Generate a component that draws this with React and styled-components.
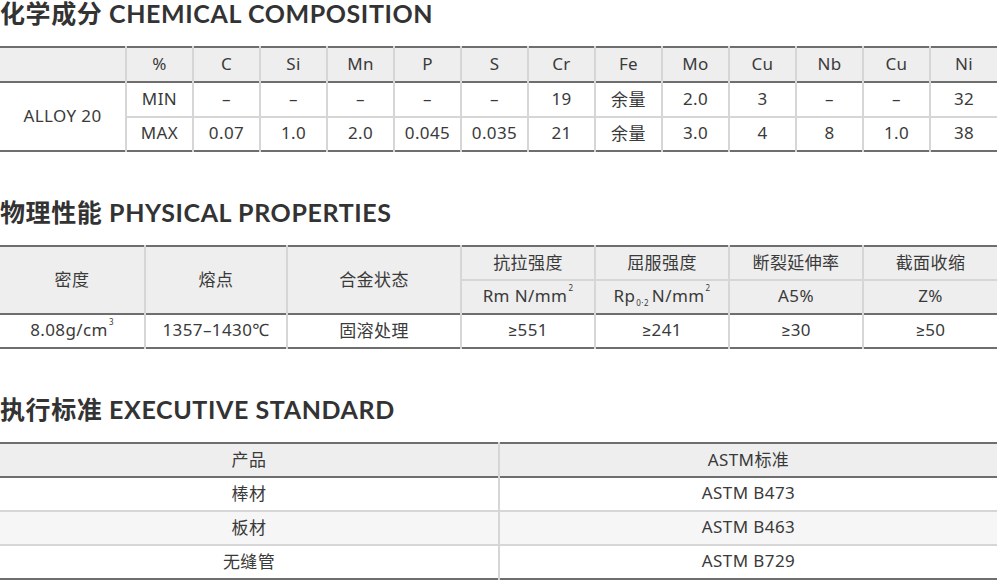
import React from 'react';
import styled, { createGlobalStyle } from 'styled-components';

const GlobalStyle = createGlobalStyle`
  html, body {
    margin: 0;
    padding: 0;
    background: #ffffff;
  }
  body {
    font-family: "Noto Sans", "Noto Sans CJK SC", sans-serif;
    color: #3a3a3a;
  }
`;

const Page = styled.div`
  width: 997px;
  display: flex;
  flex-direction: column;
  gap: 47px;
`;

const Section = styled.section`
  display: flex;
  flex-direction: column;
  gap: 16px;
`;

const Title = styled.h2`
  margin: 0;
  height: 30px;
  line-height: 26px;
  font-family: Lato, "Noto Sans CJK SC", sans-serif;
  font-size: 25px;
  font-weight: 700;
  letter-spacing: 0.6px;
  color: #333333;
  white-space: nowrap;
`;

const Table = styled.table`
  width: 997px;
  border-collapse: collapse;
  table-layout: fixed;
  border-top: 2px solid #6e6e6e;
  border-bottom: 2px solid #6e6e6e;
`;

const Head = styled.thead`
  background: #eeeeee;
  border-bottom: 2px solid #6e6e6e;
`;

const Row = styled.tr`
  background: ${({ $striped }) => ($striped ? '#f6f6f6' : '#ffffff')};
  & + & {
    border-top: 2px solid #d6d6d6;
  }
`;

const HeadRow = styled.tr`
  & + & {
    border-top: 2px solid #d6d6d6;
  }
`;

const Cell = styled.td`
  height: ${({ $h }) => ($h || 32) - 3}px;
  padding: 0 0 3px;
  text-align: center;
  vertical-align: middle;
  font-size: 17px;
  font-weight: 400;
  letter-spacing: 0.4px;
  color: #3a3a3a;
  white-space: nowrap;
  border-left: 2px solid #d6d6d6;
  &:first-child {
    border-left: none;
  }
`;

const HeadCell = styled(Cell).attrs({ as: 'th' })``;

const Sym = styled.span`
  font-family: Roboto, "Noto Sans", sans-serif;
  letter-spacing: 0.6px;
`;

const Sup = styled.sup`
  font-size: 8px;
  vertical-align: top;
  position: relative;
  top: -2px;
  margin-left: 1px;
`;

const Sub = styled.sub`
  font-size: 8px;
  vertical-align: bottom;
  position: relative;
  top: 1px;
  margin: 0 3px 0 1px;
`;

const elements = ['%', 'C', 'Si', 'Mn', 'P', 'S', 'Cr', 'Fe', 'Mo', 'Cu', 'Nb', 'Cu', 'Ni'];
const minRow = ['MIN', '–', '–', '–', '–', '–', '19', '余量', '2.0', '3', '–', '–', '32'];
const maxRow = ['MAX', '0.07', '1.0', '2.0', '0.045', '0.035', '21', '余量', '3.0', '4', '8', '1.0', '38'];

const physWidths = [145, 142, 174, 134, 134, 134, 134];
const physValues = ['551', '241', '30', '50'];

const standards = [
  ['棒材', 'ASTM B473'],
  ['板材', 'ASTM B463'],
  ['无缝管', 'ASTM B729'],
];

const innerLeft = { borderLeft: '2px solid #d6d6d6' };

function Chemical() {
  return (
    <Section>
      <Title>化学成分 CHEMICAL COMPOSITION</Title>
      <Table>
        <colgroup>
          <col style={{ width: 126 }} />
          {elements.map((_, i) => (
            <col key={i} style={{ width: 67 }} />
          ))}
        </colgroup>
        <Head>
          <HeadRow>
            <HeadCell $h={33} />
            {elements.map((el, i) => (
              <HeadCell key={i} $h={33}>{el}</HeadCell>
            ))}
          </HeadRow>
        </Head>
        <tbody>
          <Row>
            <Cell rowSpan={2}>ALLOY 20</Cell>
            {minRow.map((v, i) => (
              <Cell key={i} $h={33}>{v}</Cell>
            ))}
          </Row>
          <Row>
            {maxRow.map((v, i) => (
              <Cell key={i} $h={32} style={i === 0 ? innerLeft : undefined}>
                {v}
              </Cell>
            ))}
          </Row>
        </tbody>
      </Table>
    </Section>
  );
}

function Physical() {
  return (
    <Section>
      <Title>物理性能 PHYSICAL PROPERTIES</Title>
      <Table>
        <colgroup>
          {physWidths.map((w, i) => (
            <col key={i} style={{ width: w }} />
          ))}
        </colgroup>
        <Head>
          <HeadRow>
            <HeadCell rowSpan={2}>密度</HeadCell>
            <HeadCell rowSpan={2}>熔点</HeadCell>
            <HeadCell rowSpan={2}>合金状态</HeadCell>
            <HeadCell $h={32}>抗拉强度</HeadCell>
            <HeadCell $h={32}>屈服强度</HeadCell>
            <HeadCell $h={32}>断裂延伸率</HeadCell>
            <HeadCell $h={32}>截面收缩</HeadCell>
          </HeadRow>
          <HeadRow>
            <HeadCell $h={32} style={innerLeft}>
              Rm N/mm<Sup>2</Sup>
            </HeadCell>
            <HeadCell $h={32}>
              Rp<Sub>0·2</Sub>N/mm<Sup>2</Sup>
            </HeadCell>
            <HeadCell $h={32}>A5%</HeadCell>
            <HeadCell $h={32}>Z%</HeadCell>
          </HeadRow>
        </Head>
        <tbody>
          <Row>
            <Cell $h={32}>
              8.08g/cm<Sup>3</Sup>
            </Cell>
            <Cell>1357–1430℃</Cell>
            <Cell>固溶处理</Cell>
            {physValues.map((v) => (
              <Cell key={v}>
                <Sym>≥</Sym>
                {v}
              </Cell>
            ))}
          </Row>
        </tbody>
      </Table>
    </Section>
  );
}

function Standard() {
  return (
    <Section>
      <Title>执行标准 EXECUTIVE STANDARD</Title>
      <Table>
        <colgroup>
          <col style={{ width: 499 }} />
          <col style={{ width: 498 }} />
        </colgroup>
        <Head>
          <HeadRow>
            <HeadCell $h={32}>产品</HeadCell>
            <HeadCell $h={32}>ASTM标准</HeadCell>
          </HeadRow>
        </Head>
        <tbody>
          {standards.map(([product, spec], i) => (
            <Row key={product} $striped={i === 1}>
              <Cell $h={32}>{product}</Cell>
              <Cell $h={32}>{spec}</Cell>
            </Row>
          ))}
        </tbody>
      </Table>
    </Section>
  );
}

export default function App() {
  return (
    <>
      <GlobalStyle />
      <Page>
        <Chemical />
        <Physical />
        <Standard />
      </Page>
    </>
  );
}
